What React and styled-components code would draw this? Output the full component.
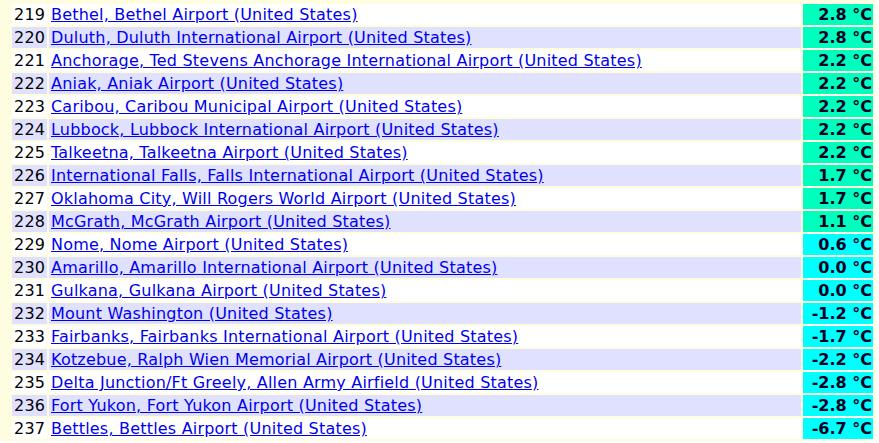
import React from "react";
import styled, { createGlobalStyle } from "styled-components";

const ROWS = [
  [219, "Bethel, Bethel Airport (United States)", "2.8"],
  [220, "Duluth, Duluth International Airport (United States)", "2.8"],
  [221, "Anchorage, Ted Stevens Anchorage International Airport (United States)", "2.2"],
  [222, "Aniak, Aniak Airport (United States)", "2.2"],
  [223, "Caribou, Caribou Municipal Airport (United States)", "2.2"],
  [224, "Lubbock, Lubbock International Airport (United States)", "2.2"],
  [225, "Talkeetna, Talkeetna Airport (United States)", "2.2"],
  [226, "International Falls, Falls International Airport (United States)", "1.7"],
  [227, "Oklahoma City, Will Rogers World Airport (United States)", "1.7"],
  [228, "McGrath, McGrath Airport (United States)", "1.1"],
  [229, "Nome, Nome Airport (United States)", "0.6"],
  [230, "Amarillo, Amarillo International Airport (United States)", "0.0"],
  [231, "Gulkana, Gulkana Airport (United States)", "0.0"],
  [232, "Mount Washington (United States)", "-1.2"],
  [233, "Fairbanks, Fairbanks International Airport (United States)", "-1.7"],
  [234, "Kotzebue, Ralph Wien Memorial Airport (United States)", "-2.2"],
  [235, "Delta Junction/Ft Greely, Allen Army Airfield (United States)", "-2.8"],
  [236, "Fort Yukon, Fort Yukon Airport (United States)", "-2.8"],
  [237, "Bettles, Bettles Airport (United States)", "-6.7"],
];

const GlobalStyle = createGlobalStyle`
  html, body {
    margin: 0;
    padding: 0;
    background: #ffffff;
  }
  body {
    font-family: "DejaVu Sans", Verdana, sans-serif;
  }
`;

const Frame = styled.div`
  width: 876px;
  box-sizing: border-box;
  padding: 2px 1px 0 10px;
  background: #fffde0;
`;

const Table = styled.table`
  width: 865px;
  table-layout: fixed;
  border-collapse: separate;
  border-spacing: 2px;
  font-size: 16px;
`;

const Row = styled.tr`
  height: 21px;
  background: ${(p) => (p.$alt ? "#e0e0ff" : "#ffffff")};
`;

const Cell = styled.td`
  padding: 0 1px 0 2px;
  height: 21px;
  line-height: 19px;
  white-space: nowrap;
  overflow: hidden;
  letter-spacing: 0.2px;
  color: #000000;
`;

const TempCell = styled(Cell)`
  text-align: right;
  font-weight: bold;
  letter-spacing: 0;
  color: #000022;
  background: ${(p) => (p.$warm ? "#00ffbf" : "#00ffff")};
`;

const PlaceLink = styled.a`
  color: #0000ee;
  text-decoration: underline;
`;

export default function App() {
  return (
    <>
      <GlobalStyle />
      <Frame>
        <Table>
          <colgroup>
            <col style={{ width: 35 }} />
            <col style={{ width: 752 }} />
            <col style={{ width: 70 }} />
          </colgroup>
          <tbody>
            {ROWS.map(([n, name, t]) => (
              <Row key={n} $alt={n % 2 === 0}>
                <Cell>{n}</Cell>
                <Cell>
                  <PlaceLink href="#">{name}</PlaceLink>
                </Cell>
                <TempCell $warm={parseFloat(t) >= 1}>{t} °C</TempCell>
              </Row>
            ))}
          </tbody>
        </Table>
      </Frame>
    </>
  );
}
